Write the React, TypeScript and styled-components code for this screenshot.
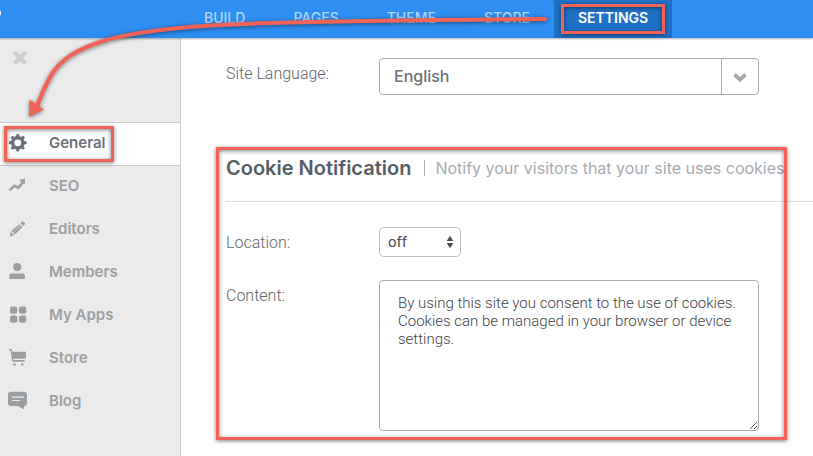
import React from "react";
import styled, { createGlobalStyle, css } from "styled-components";

const MARK = "#f26256";

const GlobalStyle = createGlobalStyle`
  *, *::before, *::after { box-sizing: border-box; }
  html, body { margin: 0; background: #fff; }
  body, button, select, textarea { font-family: Inter, "Open Sans", sans-serif; }
`;

const Page = styled.div`
  position: relative;
  display: flex;
  flex-direction: column;
  min-height: 100vh;
  overflow: hidden;
`;

const Header = styled.header`
  position: relative;
  z-index: 1;
  display: flex;
  align-items: stretch;
  height: 38px;
  background: #2e8ef2;
  box-shadow: 0 1px 2px rgba(0, 0, 0, 0.3);
`;

const Brand = styled.div`
  flex: 0 0 180px;
  svg { display: block; }
`;

const Nav = styled.nav`
  display: flex;
`;

const NavLink = styled.a<{ $active?: boolean }>`
  position: relative;
  display: flex;
  align-items: center;
  padding: 0 24px 2px;
  font-size: 14px;
  line-height: 20px;
  font-weight: 500;
  text-decoration: none;
  color: #b4d6fb;
  ${(p) =>
    p.$active &&
    css`
      background: #2070c6;
      color: #fff;
      font-weight: 600;
    `}
`;

const Highlight = styled.span<{ $inset: string }>`
  position: absolute;
  inset: ${(p) => p.$inset};
  border: 3px solid ${MARK};
  box-shadow: 0 1px 4px rgba(0, 0, 0, 0.5), inset 0 1px 4px rgba(0, 0, 0, 0.5);
  pointer-events: none;
`;

const Body = styled.div`
  flex: 1;
  display: flex;
`;

const Sidebar = styled.aside`
  flex: 0 0 181px;
  background: #ebebeb;
  border-right: 1px solid #c9c9c9;
`;

const SidebarTop = styled.div`
  height: 84px;
  padding: 12px;
`;

const CloseButton = styled.button`
  display: block;
  padding: 0;
  border: 0;
  background: none;
  svg { display: block; }
`;

const SideLink = styled.a<{ $active?: boolean }>`
  position: relative;
  display: flex;
  align-items: center;
  gap: 21px;
  height: 44px;
  margin-bottom: -1px;
  padding: 0 8px 2px;
  border: 1px solid transparent;
  border-width: 1px 0;
  font-size: 15px;
  line-height: 20px;
  font-weight: 600;
  text-decoration: none;
  color: #9b9fa2;
  ${(p) =>
    p.$active &&
    css`
      z-index: 1;
      background: #fff;
      border-color: #c9c9c9;
      color: #6b7279;
    `}
`;

const Icon = styled.svg`
  flex: none;
  width: 20px;
  height: 20px;
  fill: currentColor;
`;

const Main = styled.main`
  flex: 1;
  min-width: 0;
  padding: 20px 0 16px 45px;
`;

const Section = styled.section`
  position: relative;
  margin-top: 52px;
`;

const Field = styled.div`
  display: grid;
  grid-template-columns: 153px minmax(0, 380px);
  align-items: start;
`;

const Label = styled.label`
  padding-top: 6px;
  font-family: Roboto, sans-serif;
  font-size: 16px;
  line-height: 20px;
  font-weight: 300;
  color: #5f666d;
`;

const SelectBox = styled.div`
  display: grid;
  grid-template-columns: minmax(0, 1fr) 37px;
  height: 37px;
  border: 1px solid #a9abae;
  border-radius: 4px;
`;

const LanguageSelect = styled.select`
  grid-area: 1 / 1 / 2 / 3;
  appearance: none;
  padding: 0 52px 2px 14px;
  border: 0;
  background: none;
  font-size: 16px;
  font-weight: 500;
  color: #6b7279;
`;

const Toggle = styled.span`
  grid-area: 1 / 2 / 2 / 3;
  display: grid;
  place-items: center;
  border-left: 1px solid #a9abae;
  pointer-events: none;
`;

const SectionHead = styled.div`
  display: flex;
  align-items: center;
  height: 55px;
  padding-bottom: 12px;
  border-bottom: 1px solid #dedede;
  white-space: nowrap;
`;

const Title = styled.h2`
  margin: 0;
  font-size: 20px;
  line-height: 24px;
  font-weight: 600;
  color: #555e65;
`;

const Hint = styled.p`
  margin: 0 0 0 13px;
  padding-left: 10px;
  border-left: 1px solid #a9abae;
  font-size: 16px;
  line-height: 16px;
  font-weight: 400;
  color: #a7abb0;
`;

const Fields = styled.div`
  display: grid;
  gap: 23px;
  padding-top: 25px;
`;

const SmallSelectBox = styled.div`
  display: grid;
  grid-template-columns: 1fr 14px;
  align-items: center;
  width: 82px;
  height: 30px;
  border: 1px solid #bdbfc1;
  border-radius: 5px;
  svg { grid-area: 1 / 2 / 2 / 3; pointer-events: none; }
`;

const SmallSelect = styled.select`
  grid-area: 1 / 1 / 2 / 3;
  height: 28px;
  appearance: none;
  padding: 0 24px 0 8px;
  border: 0;
  background: none;
  font-family: Roboto, sans-serif;
  font-size: 15px;
  color: #4a4e52;
`;

const TextArea = styled.textarea`
  display: block;
  width: 100%;
  height: 151px;
  padding: 13px 18px;
  border: 1px solid #a9abb3;
  border-radius: 4px;
  background: #fff;
  font-family: Roboto, sans-serif;
  font-size: 15px;
  line-height: 18px;
  font-weight: 300;
  color: #3f4347;
  resize: both;
`;

const Arrow = styled.svg`
  position: absolute;
  z-index: 3;
  top: 0;
  left: 0;
  width: 560px;
  height: 130px;
  pointer-events: none;
  filter: drop-shadow(0 1px 2px rgba(0, 0, 0, 0.5));
`;

const gearAngles = [0, 45, 90, 135];

const icons: Record<string, React.ReactNode> = {
  General: (
    <>
      {gearAngles.map((a) => (
        <path key={a} d="M8.6 1h2.400l1.100 4h-4.600zM8.600 18.600h2.400l1.100-4h-4.600z" transform={`rotate(${a} 9.800 9.800)`} />
      ))}
      <circle cx="9.8" cy="9.8" r="5.100" fill="none" stroke="currentColor" strokeWidth="3.400" />
    </>
  ),
  SEO: (
    <>
      <path d="M1.700 14.300 6.200 9.800l4.300 2L15 6" fill="none" stroke="currentColor" strokeWidth="2.600" strokeLinejoin="round" />
      <path d="M11 4 17 2.500l-.2 6.300z" />
    </>
  ),
  Editors: (
    <>
      <path d="M12.300 4.300l1.600-1.600q.9-.8 1.800 0l1 1q.8.9 0 1.800l-1.600 1.600z" />
      <path d="M11.500 5.100l2.800 2.800-7.300 7.300-3.600-3.600z" transform="translate(0 .2)" />
      <path d="M2.900 12.800l3.400 3.400L1.700 17.600z" />
      <path d="M5.200 13.800l7.200-7.200" stroke="#ebebeb" strokeWidth=".6" />
    </>
  ),
  Members: (
    <>
      <circle cx="9.200" cy="5" r="4.100" />
      <path d="M1.300 17v-3q0-2.400 2.400-2.400h10.900q2.400 0 2.400 2.400v3z" />
    </>
  ),
  "My Apps": (
    <>
      <rect x="2" y="1.500" width="7.300" height="7.300" rx="2.200" />
      <rect x="11" y="1.500" width="7.300" height="7.300" rx="2.200" />
      <rect x="2" y="10.500" width="7.300" height="7.300" rx="2.200" />
      <rect x="11" y="10.500" width="7.300" height="7.300" rx="2.200" />
    </>
  ),
  Store: (
    <>
      <path d="M1.300 1h2.300l.9 2.800H18v5.600l-1.100 1.400H5.200l.3 1.300h11.200v1.600H4.300L2.700 2.700H1.300z" />
      <circle cx="6.500" cy="16.500" r="1.300" />
      <circle cx="14.300" cy="16.500" r="1.300" />
    </>
  ),
  Blog: (
    <>
      <path d="M3 .7h13q3 0 3 3v8.200q0 3-3 3v3.300l-6.500-3.300H3q-3 0-3-3V3.700q0-3 3-3z" />
      <path d="M4 6.200h12M4 9.500h8" stroke="#ebebeb" strokeWidth="1.200" />
    </>
  ),
};

const navItems = ["BUILD", "PAGES", "THEME", "STORE", "SETTINGS"];
const notice =
  "By using this site you consent to the use of cookies. Cookies can be managed in your browser or device settings.";

export default function App() {
  return (
    <Page>
      <GlobalStyle />
      <Header>
        <Brand>
          <svg width="4" height="20" aria-hidden="true">
            <path d="M0 11h1v2q0 2-1 3z" fill="#fff" />
          </svg>
        </Brand>
        <Nav>
          {navItems.map((name) => (
            <NavLink key={name} href="#" $active={name === "SETTINGS"}>
              {name}
              {name === "SETTINGS" && <Highlight $inset="4px 7px" />}
            </NavLink>
          ))}
        </Nav>
      </Header>
      <Body>
        <Sidebar>
          <SidebarTop>
            <CloseButton aria-label="Close">
              <svg width="16" height="16" viewBox="0 0 16 16">
                <path d="M3.500 3.500l9 9M12.500 3.500l-9 9" stroke="#cccdce" strokeWidth="4.400" strokeLinecap="round" />
              </svg>
            </CloseButton>
          </SidebarTop>
          {Object.keys(icons).map((name) => (
            <SideLink key={name} href="#" $active={name === "General"}>
              <Icon viewBox="0 0 20 20" aria-hidden="true">{icons[name]}</Icon>
              {name}
              {name === "General" && <Highlight $inset="3px 66px 3px 4px" />}
            </SideLink>
          ))}
        </Sidebar>
        <Main>
          <Field>
            <Label htmlFor="language">Site Language:</Label>
            <SelectBox>
              <LanguageSelect id="language">
                <option>English</option>
              </LanguageSelect>
              <Toggle>
                <svg width="16" height="12" viewBox="0 0 16 12" aria-hidden="true">
                  <path d="M2.500 3.500l5.500 5.200 5.500-5.200" fill="none" stroke="#a5a9ad" strokeWidth="3.800" />
                </svg>
              </Toggle>
            </SelectBox>
          </Field>
          <Section>
            <SectionHead>
              <Title>Cookie Notification</Title>
              <Hint>Notify your visitors that your site uses cookies</Hint>
            </SectionHead>
            <Fields>
              <Field>
                <Label htmlFor="location">Location:</Label>
                <SmallSelectBox>
                  <SmallSelect id="location">
                    <option>off</option>
                  </SmallSelect>
                  <svg width="8" height="14" viewBox="0 0 8 14" aria-hidden="true">
                    <path d="M4 .8l3.300 5.200H.7zM4 13.200l3.300-5.200H.7z" fill="#4a4e52" />
                  </svg>
                </SmallSelectBox>
              </Field>
              <Field>
                <Label htmlFor="content">Content:</Label>
                <TextArea id="content" defaultValue={notice} />
              </Field>
            </Fields>
            <Highlight $inset="0 26px -9px -10px" />
          </Section>
        </Main>
      </Body>
      <Arrow viewBox="0 0 560 130" aria-hidden="true">
        <path
          d="M545 19C430 20 350 20.500 270 23C200 25 150 29 110 39C75 49 60 60 50 77C43 90 40 98 37 106"
          fill="none"
          stroke={MARK}
          strokeWidth="4"
          strokeLinecap="round"
        />
        <path d="M29.500 99.500L44 109.500L29 117z" fill={MARK} />
      </Arrow>
    </Page>
  );
}
